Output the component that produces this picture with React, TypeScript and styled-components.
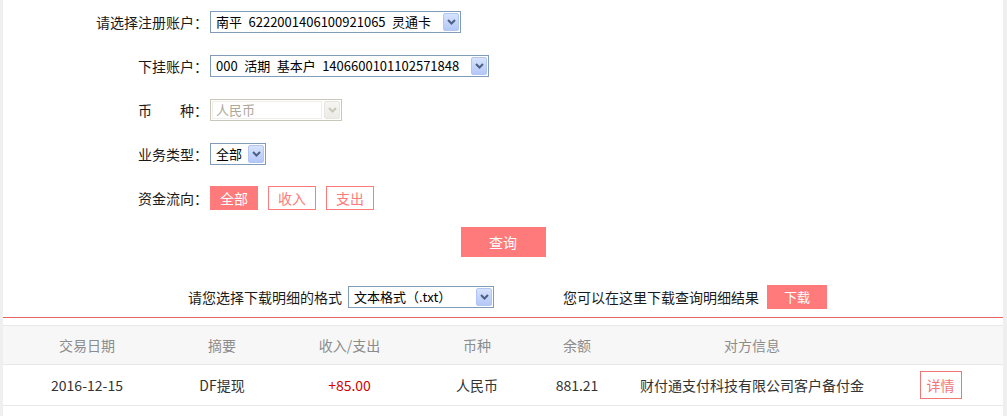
import React from "react";
import styled, { createGlobalStyle } from "styled-components";

const GlobalStyle = createGlobalStyle`
  html, body {
    margin: 0;
    padding: 0;
    background: #efefef;
  }
  body {
    font-family: "Noto Sans CJK SC", "Noto Sans", sans-serif;
    font-size: 14px;
    color: #222;
  }
`;

const Page = styled.div`
  width: 1000px;
  margin-left: 3px;
  min-height: 416px;
  background: #fff;
  overflow: hidden;
`;

const Form = styled.div`
  display: flex;
  flex-direction: column;
`;

const FormRow = styled.div`
  display: flex;
  align-items: center;
  height: 44px;
`;

const Label = styled.div`
  width: 205px;
  text-align: right;
  font-size: 14px;
  line-height: 16px;
  color: #1a1a1a;
  white-space: pre;
`;

const Controls = styled.div`
  margin-left: 2px;
  display: flex;
  align-items: center;
  gap: 10px;
`;

const SelectBox = styled.div<{ $w: number; $disabled?: boolean }>`
  display: flex;
  align-items: center;
  box-sizing: border-box;
  width: ${(p) => p.$w}px;
  height: 22px;
  padding: 1px;
  border: 1px solid ${(p) => (p.$disabled ? "#c9c7ba" : "#7f9db9")};
  background: #fff;
`;

const SelectText = styled.div<{ $disabled?: boolean }>`
  flex: 1;
  align-self: stretch;
  display: flex;
  align-items: center;
  box-sizing: border-box;
  padding-left: 3px;
  font-size: 13px;
  line-height: 16px;
  white-space: pre;
  overflow: hidden;
  color: ${(p) => (p.$disabled ? "#aca899" : "#000")};
  border: 1px solid ${(p) => (p.$disabled ? "#efeee8" : "transparent")};
  margin-right: ${(p) => (p.$disabled ? "2px" : "0")};
`;

const ArrowBox = styled.div<{ $disabled?: boolean }>`
  flex: none;
  width: 16px;
  height: 18px;
  box-sizing: border-box;
  display: flex;
  align-items: center;
  justify-content: center;
  border: 1px solid ${(p) => (p.$disabled ? "#e6e5de" : "#b3c5f2")};
  border-radius: 2px;
  background: ${(p) =>
    p.$disabled
      ? "linear-gradient(#f5f5f2, #ecebe6)"
      : "linear-gradient(#d6e3fe, #b4c8f7)"};
`;

const Select: React.FC<{ w: number; text: string; disabled?: boolean }> = ({
  w,
  text,
  disabled,
}) => (
  <SelectBox $w={w} $disabled={disabled}>
    <SelectText $disabled={disabled}>{text}</SelectText>
    <ArrowBox $disabled={disabled}>
      <svg width="9" height="6" viewBox="0 0 9 6">
        <path
          d="M1 1 L4.5 4.5 L8 1"
          fill="none"
          stroke={disabled ? "#c9c7ba" : "#4d6185"}
          strokeWidth="2"
        />
      </svg>
    </ArrowBox>
  </SelectBox>
);

const FlowButton = styled.button<{ $active?: boolean }>`
  box-sizing: border-box;
  width: 48px;
  height: 24px;
  padding: 0;
  font-family: inherit;
  font-size: 14px;
  line-height: 16px;
  cursor: pointer;
  border: 1px solid #ff7a7a;
  background: ${(p) => (p.$active ? "#ff7a7a" : "#fff")};
  color: ${(p) => (p.$active ? "#fff" : "#ff7a7a")};
`;

const ActionRow = styled.div`
  display: flex;
  justify-content: center;
  margin-top: 7px;
`;

const PrimaryButton = styled.button<{ $w: number; $h: number; $fs: number }>`
  box-sizing: border-box;
  width: ${(p) => p.$w}px;
  height: ${(p) => p.$h}px;
  padding: 0;
  border: none;
  background: #ff7a7a;
  color: #fff;
  font-family: inherit;
  font-size: ${(p) => p.$fs}px;
  line-height: 16px;
  cursor: pointer;
`;

const DownloadRow = styled.div`
  display: flex;
  align-items: center;
  height: 24px;
  margin-top: 28px;
  padding-left: 185px;
`;

const DownloadText = styled.span<{ $gap: number }>`
  font-size: 14px;
  line-height: 16px;
  color: #1a1a1a;
  margin-right: ${(p) => p.$gap}px;
  white-space: nowrap;
`;

const Spacer = styled.div<{ $w: number }>`
  width: ${(p) => p.$w}px;
  flex: none;
`;

const Divider = styled.div`
  margin-top: 8px;
  height: 1px;
  background: #e86464;
`;

const Table = styled.table`
  margin-top: 7px;
  width: 1000px;
  border-collapse: collapse;
  table-layout: fixed;
`;

const HeadCell = styled.th`
  height: 38px;
  padding: 0;
  background: #f7f7f7;
  border-top: 1px solid #e8e8e8;
  border-bottom: 1px solid #e8e8e8;
  font-weight: normal;
  font-size: 14px;
  color: #8c8c8c;
  text-align: center;
`;

const Cell = styled.td<{ $red?: boolean }>`
  height: 40px;
  padding: 0;
  border-bottom: 1px solid #e8e8e8;
  font-size: 14px;
  color: ${(p) => (p.$red ? "#d40000" : "#333")};
  text-align: center;
  white-space: nowrap;
`;

const DetailButton = styled.button`
  box-sizing: border-box;
  width: 42px;
  height: 28px;
  padding: 0;
  background: #fff;
  border: 1px solid #f27676;
  color: #f27676;
  font-family: inherit;
  font-size: 14px;
  cursor: pointer;
  vertical-align: middle;
`;

const colWidths = [168, 102, 153, 102, 98, 252, 125];
const headers = ["交易日期", "摘要", "收入/支出", "币种", "余额", "对方信息", ""];

export default function App() {
  return (
    <>
      <GlobalStyle />
      <Page>
        <Form>
          <FormRow>
            <Label>请选择注册账户：</Label>
            <Controls>
              <Select w={251} text={"南平\u20026222001406100921065\u2002灵通卡"} />
            </Controls>
          </FormRow>
          <FormRow>
            <Label>下挂账户：</Label>
            <Controls>
              <Select
                w={279}
                text={"000\u2002活期\u2002基本户\u20021406600101102571848"}
              />
            </Controls>
          </FormRow>
          <FormRow>
            <Label>{"币　　种："}</Label>
            <Controls>
              <Select w={132} text="人民币" disabled />
            </Controls>
          </FormRow>
          <FormRow>
            <Label>业务类型：</Label>
            <Controls>
              <Select w={56} text="全部" />
            </Controls>
          </FormRow>
          <FormRow>
            <Label>资金流向：</Label>
            <Controls>
              <FlowButton $active>全部</FlowButton>
              <FlowButton>收入</FlowButton>
              <FlowButton>支出</FlowButton>
            </Controls>
          </FormRow>
        </Form>
        <ActionRow>
          <PrimaryButton $w={85} $h={30} $fs={14}>
            查询
          </PrimaryButton>
        </ActionRow>
        <DownloadRow>
          <DownloadText $gap={6}>请您选择下载明细的格式</DownloadText>
          <Select w={146} text="文本格式（.txt）" />
          <Spacer $w={69} />
          <DownloadText $gap={8}>您可以在这里下载查询明细结果</DownloadText>
          <PrimaryButton $w={60} $h={24} $fs={13}>
            下载
          </PrimaryButton>
        </DownloadRow>
        <Divider />
        <Table>
          <colgroup>
            {colWidths.map((w, i) => (
              <col key={i} style={{ width: w }} />
            ))}
          </colgroup>
          <thead>
            <tr>
              {headers.map((h, i) => (
                <HeadCell key={i}>{h}</HeadCell>
              ))}
            </tr>
          </thead>
          <tbody>
            <tr>
              <Cell>2016-12-15</Cell>
              <Cell>DF提现</Cell>
              <Cell $red>+85.00</Cell>
              <Cell>人民币</Cell>
              <Cell>881.21</Cell>
              <Cell>财付通支付科技有限公司客户备付金</Cell>
              <Cell>
                <DetailButton>详情</DetailButton>
              </Cell>
            </tr>
          </tbody>
        </Table>
      </Page>
    </>
  );
}
